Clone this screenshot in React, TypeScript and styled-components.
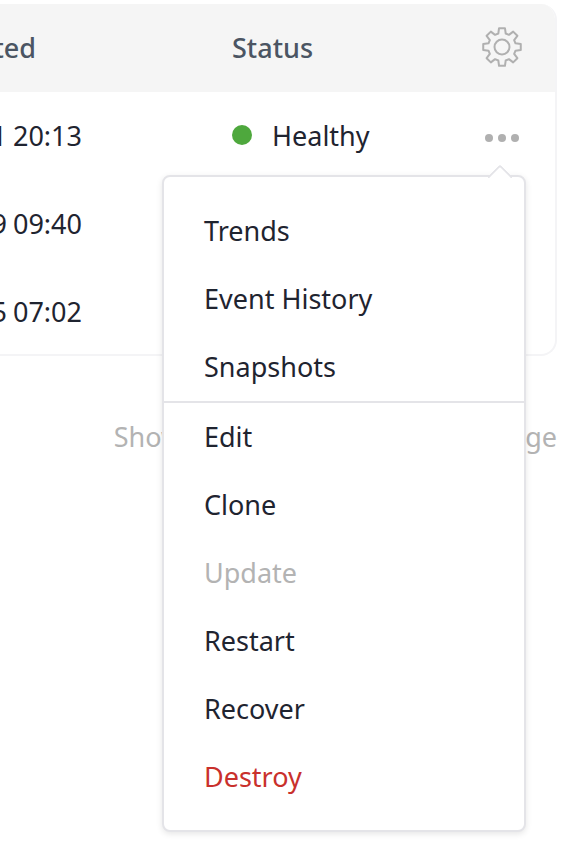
import styled, { createGlobalStyle } from 'styled-components';

const GlobalStyle = createGlobalStyle`
  html, body {
    margin: 0;
    padding: 0;
    background: #fff;
    overflow: hidden;
  }
  body {
    font-family: "Noto Sans", "Open Sans", sans-serif;
    font-size: 27px;
    color: #1f2430;
  }
`;

const Page = styled.div`
  position: relative;
  width: 568px;
  height: 864px;
  overflow: hidden;
`;

const Card = styled.div`
  margin: 4px 11px 0 -300px;
  height: 352px;
  box-sizing: border-box;
  border: 2px solid #f4f4f6;
  border-top: 0;
  border-radius: 16px;
  overflow: hidden;
`;

const Row = styled.div<{ $head?: boolean }>`
  display: grid;
  grid-template-columns: 530px 1fr 106px;
  align-items: center;
  height: 88px;
  padding-bottom: 2px;
  box-sizing: border-box;
  background: ${p => (p.$head ? '#f5f5f5' : 'transparent')};
  color: ${p => (p.$head ? '#4b5563' : 'inherit')};
  font-weight: ${p => (p.$head ? 500 : 400)};
`;

const DateCell = styled.div<{ $head?: boolean }>`
  text-align: right;
  padding-right: ${p => (p.$head ? 196 : 150)}px;
  white-space: nowrap;
  word-spacing: -1px;
`;

const StatusCell = styled.div`
  display: flex;
  align-items: center;
  gap: 20px;
`;

const Dot = styled.span`
  width: 20px;
  height: 20px;
  border-radius: 50%;
  background: #4ea83d;
`;

const ActionCell = styled.div`
  display: flex;
  align-items: center;
  justify-content: center;
`;

const More = styled.div`
  display: flex;
  gap: 5px;
  margin-top: 6px;
  span {
    width: 8px;
    height: 8px;
    border-radius: 50%;
    background: #b0b0b0;
  }
`;

const Footer = styled.div`
  margin: 62px 11px 0 0;
  text-align: right;
  color: #b3b3b3;
  white-space: nowrap;
  word-spacing: 2px;
`;

const Menu = styled.div`
  position: absolute;
  left: 162px;
  top: 175px;
  width: 364px;
  box-sizing: border-box;
  padding: 20px 0 19px;
  background: #fff;
  border: 2px solid #e4e4e8;
  border-radius: 8px;
  box-shadow: 0 2px 6px rgba(0, 0, 0, 0.1);

  &::before {
    content: '';
    position: absolute;
    right: 15px;
    top: -9px;
    width: 16px;
    height: 16px;
    background: #fff;
    border: 2px solid #e4e4e8;
    border-right: 0;
    border-bottom: 0;
    border-top-left-radius: 3px;
    transform: rotate(45deg);
  }
`;

const Item = styled.div<{ $tone?: 'muted' | 'danger' }>`
  position: relative;
  height: 68px;
  line-height: 68px;
  padding-left: 40px;
  color: ${p => (p.$tone === 'muted' ? '#b3b3b3' : p.$tone === 'danger' ? '#c9302c' : 'inherit')};
`;

const Divider = styled.div`
  height: 2px;
  background: #e4e4e8;
`;

// 8-tooth cog outline, teeth computed around the centre
function gearPath(cx: number, cy: number, outer: number, root: number) {
  const teeth = 8;
  const pts: string[] = [];
  for (let i = 0; i < teeth; i++) {
    const a = (i * 2 * Math.PI) / teeth - Math.PI / 2;
    const step = (2 * Math.PI) / teeth;
    const offsets: [number, number][] = [
      [-0.34, root],
      [-0.2, outer],
      [0.2, outer],
      [0.34, root],
    ];
    offsets.forEach(([f, r]) => {
      const t = a + f * step;
      pts.push(`${(cx + r * Math.cos(t)).toFixed(2)} ${(cy + r * Math.sin(t)).toFixed(2)}`);
    });
  }
  return `M${pts.join('L')}Z`;
}

function GearIcon() {
  return (
    <svg width="42" height="42" viewBox="0 0 42 42" fill="none" stroke="#b0b0b0" strokeWidth="2" strokeLinejoin="round">
      <path d={gearPath(21, 21, 19, 14)} />
      <circle cx="21" cy="21" r="7.5" />
    </svg>
  );
}

export default function App() {
  return (
    <Page>
      <GlobalStyle />
      <Card>
        <Row $head>
          <DateCell $head>Updated</DateCell>
          <div>Status</div>
          <ActionCell>
            <GearIcon />
          </ActionCell>
        </Row>
        <Row>
          <DateCell>2023-11-21 20:13</DateCell>
          <StatusCell>
            <Dot />
            Healthy
          </StatusCell>
          <ActionCell>
            <More>
              <span />
              <span />
              <span />
            </More>
          </ActionCell>
        </Row>
        <Row>
          <DateCell>2023-10-19 09:40</DateCell>
        </Row>
        <Row>
          <DateCell>2023-10-15 07:02</DateCell>
        </Row>
      </Card>
      <Footer>Showing 3 of 3 items, 20 per page</Footer>
      <Menu>
        <Item>Trends</Item>
        <Item>Event History</Item>
        <Item>Snapshots</Item>
        <Divider />
        <Item>Edit</Item>
        <Item>Clone</Item>
        <Item $tone="muted">Update</Item>
        <Item>Restart</Item>
        <Item>Recover</Item>
        <Item $tone="danger">Destroy</Item>
      </Menu>
    </Page>
  );
}
